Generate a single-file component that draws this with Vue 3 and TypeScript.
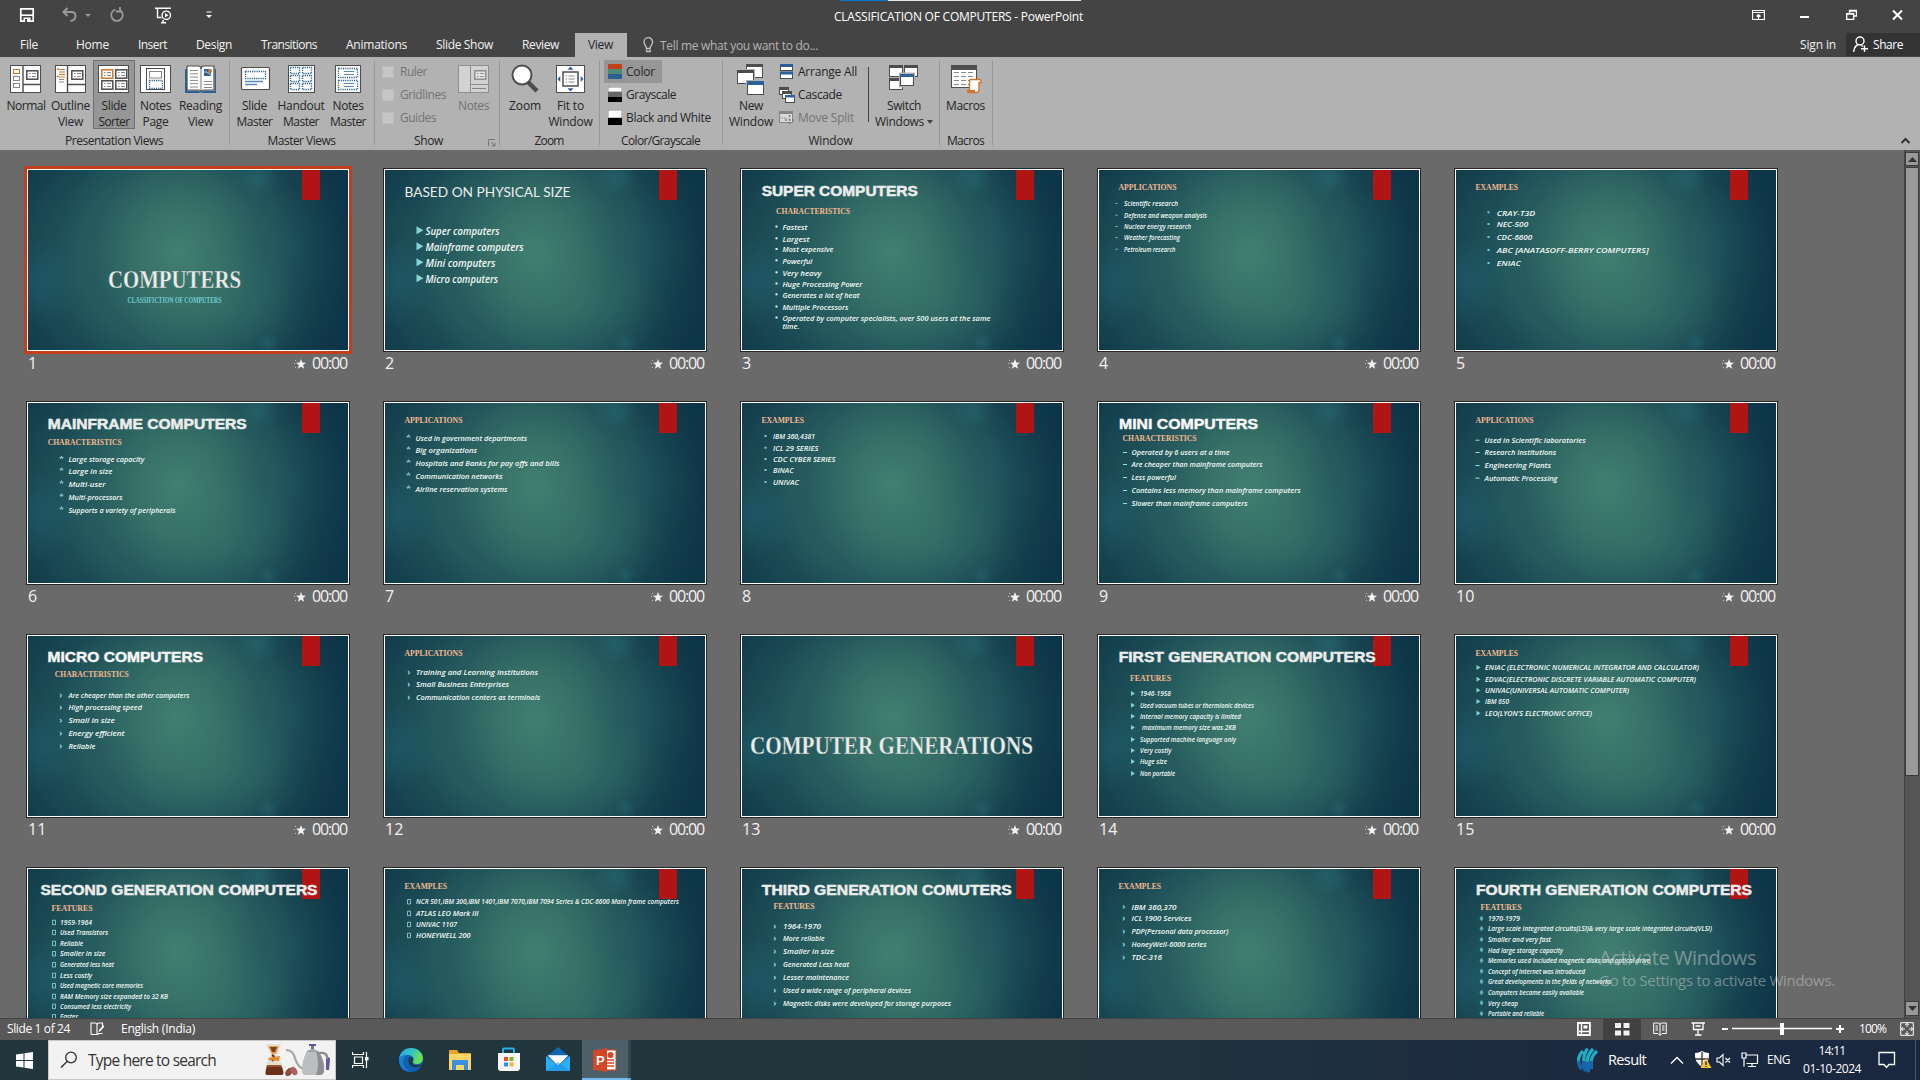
<script setup lang="ts">
type Line = [text: string, baseline: number, width: number, dx?: number]
interface Slide {
  title?: [text: string, x: number, width: number, kind: 'black' | 'thin' | 'deco', baseline: number, fill?: string]
  sub?: [text: string, x: number, baseline: number, width: number]
  bullet?: string
  bx?: number
  x?: number
  size?: number
  lines?: Line[]
}

const bold = (text: string, x: number, width: number, fill = '#ececec'): Slide['title'] => [text, x, width, 'black', 26, fill]

const slides: Slide[] = [
  { title: ['COMPUTERS', 80, 133, 'deco', 118], sub: ['CLASSIFICTION OF COMPUTERS', 99.5, 133, 94] },
  {
    title: ['BASED ON PHYSICAL SIZE', 19.5, 166, 'thin', 27], bullet: 'bigtri', bx: 31.5, x: 40.5, size: 10,
    lines: [['Super computers', 64.3, 74], ['Mainframe computers', 80.3, 98], ['Mini computers', 96.3, 70], ['Micro computers', 112.3, 72.5]],
  },
  {
    title: bold('SUPER COMPUTERS', 19.7, 156), sub: ['CHARACTERISTICS', 34, 44, 74], bullet: 'dotw', bx: 33.5, x: 40.4, size: 7.5,
    lines: [['Fastest', 59.5, 25], ['Largest', 71.3, 27], ['Most expensive', 82, 51], ['Powerful', 93.3, 30], ['Very heavy', 105.3, 39], ['Huge Processing Power', 116.5, 80], ['Generates a lot of heat', 127.3, 77], ['Multiple Processors', 139.5, 66], ['Operated by computer specialists, over 500 users at the same', 150.5, 208], ['time.', 158.5, 17, -1]],
  },
  {
    sub: ['APPLICATIONS', 19.5, 20, 58], bullet: 'minus', bx: 16.5, x: 25, size: 7,
    lines: [['Scientific research', 36, 54], ['Defense and weapon analysis', 47.7, 83], ['Nuclear energy research', 59, 67], ['Weather forecasting', 70, 56], ['Petroleum research', 81.7, 51.5]],
  },
  {
    sub: ['EXAMPLES', 19.5, 20, 42.5], bullet: 'dot', bx: 31.5, x: 40.7, size: 6.6,
    lines: [['CRAY-T3D', 45.3, 38.5], ['NEC-500', 57, 31.5], ['CDC-6600', 70, 35.5], ['ABC [ANATASOFF-BERRY COMPUTERS]', 83, 152], ['ENIAC', 96, 24]],
  },
  {
    title: bold('MAINFRAME COMPUTERS', 19.7, 199), sub: ['CHARACTERISTICS', 19.7, 41.7, 74], bullet: 'star', bx: 31.5, x: 40.4, size: 7.5,
    lines: [['Large storage capacity', 59, 76], ['Large in size', 70.7, 44], ['Multi-user', 83.7, 37], ['Multi-processors', 96.7, 54], ['Supports a variety of peripherals', 109.7, 107]],
  },
  {
    sub: ['APPLICATIONS', 19.5, 20, 58], bullet: 'star', bx: 21.5, x: 30.5, size: 7.5,
    lines: [['Used in government departments', 37.7, 111.5], ['Big organizations', 49.7, 61.5], ['Hospitals and Banks for pay offs and bills', 62.7, 144], ['Communication networks', 75.7, 87], ['Airline reservation systems', 88.7, 92]],
  },
  {
    sub: ['EXAMPLES', 19.5, 20, 42.5], bullet: 'dot', bx: 22.5, x: 31, size: 7,
    lines: [['IBM 360,4381', 36, 42], ['ICL 29 SERIES', 47.7, 45.5], ['CDC CYBER SERIES', 59, 62.5], ['BINAC', 70, 20.5], ['UNIVAC', 82, 26]],
  },
  {
    title: bold('MINI COMPUTERS', 20, 139, '#fff'), sub: ['CHARACTERISTICS', 23.5, 38, 74], bullet: 'dash', bx: 24, x: 32.5, size: 7.5,
    lines: [['Operated by 6 users at a time', 52, 98], ['Are cheaper than mainframe computers', 64, 131], ['Less powerful', 77, 44.5], ['Contains less memory than mainframe computers', 90, 169], ['Slower than mainframe computers', 103, 116]],
  },
  {
    sub: ['APPLICATIONS', 19.5, 20, 58], bullet: 'dash', bx: 19.5, x: 28.5, size: 7.5,
    lines: [['Used in Scientific laboratories', 39.7, 101], ['Research Institutions', 52, 71.5], ['Engineering Plants', 65, 66.5], ['Automatic Processing', 77.7, 73]],
  },
  {
    title: bold('MICRO COMPUTERS', 19.5, 155.5, '#fff'), sub: ['CHARACTERISTICS', 26.8, 41, 74], bullet: 'chev', bx: 32, x: 40.4, size: 7.5,
    lines: [['Are cheaper than the other computers', 62, 121], ['High processing speed', 74, 73.5], ['Small in size', 87, 46.5], ['Energy efficient', 100, 56], ['Reliable', 112.7, 27]],
  },
  {
    sub: ['APPLICATIONS', 19.5, 20, 58], bullet: 'chev', bx: 23, x: 31, size: 7.5,
    lines: [['Training and Learning Institutions', 39, 122], ['Small Business Enterprises', 51, 93], ['Communication centers as terminals', 64, 124]],
  },
  { title: ['COMPUTER GENERATIONS', 8, 283, 'deco', 118] },
  {
    title: bold('FIRST GENERATION COMPUTERS', 19.7, 257), sub: ['FEATURES', 31, 44.7, 41], bullet: 'tri', bx: 32, x: 41, size: 7,
    lines: [['1946-1958', 60, 31], ['Used vacuum tubes or thermionic devices', 71.7, 114], ['Internal memory capacity is limited', 82.7, 101], ['maximum memory size was 2KB', 94, 94, 2], ['Supported machine language only', 106, 96], ['Very costly', 117, 31.5], ['Huge size', 128, 27], ['Non portable', 140, 35]],
  },
  {
    sub: ['EXAMPLES', 19.5, 20, 42.5], bullet: 'tri', bx: 20.5, x: 29, size: 7,
    lines: [['ENIAC (ELECTRONIC NUMERICAL INTEGRATOR AND CALCULATOR)', 34, 214], ['EDVAC(ELECTRONIC DISCRETE VARIABLE AUTOMATIC COMPUTER)', 45.7, 211], ['UNIVAC(UNIVERSAL AUTOMATIC COMPUTER)', 56.7, 144], ['IBM 650', 68, 24], ["LEO(LYON'S ELECTRONIC OFFICE)", 79.7, 107]],
  },
  {
    title: bold('SECOND GENERATION COMPUTERS', 12.5, 277), sub: ['FEATURES', 23.5, 41.7, 41], bullet: 'box', bx: 24, x: 32, size: 7,
    lines: [['1959-1964', 55.7, 32], ['Used Transistors', 65.7, 48], ['Reliable', 76.7, 23], ['Smaller in size', 87, 45.5], ['Generated less heat', 98, 54], ['Less costly', 108.7, 32], ['Used magnetic core memories', 119, 83], ['RAM Memory size expanded to 32 KB', 129.7, 108], ['Consumed less electricity', 139.7, 71], ['Faster', 150, 18]],
  },
  {
    sub: ['EXAMPLES', 19.5, 20, 42.5], bullet: 'box', bx: 22, x: 31, size: 7,
    lines: [['NCR 501,IBM 300,IBM 1401,IBM 7070,IBM 7094 Series & CDC-6600 Main frame computers', 35, 263], ['ATLAS LEO Mark III', 46.7, 62.5], ['UNIVAC 1107', 57.7, 41], ['HONEYWELL 200', 68.7, 54.5]],
  },
  {
    title: bold('THIRD GENERATION COMUTERS', 19.8, 250), sub: ['FEATURES', 31.5, 40, 41], bullet: 'chev', bx: 32, x: 41, size: 7.5,
    lines: [['1964-1970', 60, 38], ['More reliable', 72, 41.5], ['Smaller in size', 85, 51], ['Generated Less heat', 98, 66], ['Lesser maintenance', 111, 66], ['Used a wide range of peripheral devices', 124, 128], ['Magnetic disks were developed for storage purposes', 137, 168]],
  },
  {
    sub: ['EXAMPLES', 19.5, 20, 42.5], bullet: 'chev', bx: 24, x: 32.5, size: 7.5,
    lines: [['IBM 360,370', 40.3, 45], ['ICL 1900 Services', 52, 60], ['PDP(Personal data processor)', 65, 97], ['HoneyWell-6000 series', 78, 75], ['TDC-316', 91, 30.5]],
  },
  {
    title: bold('FOURTH GENERATION COMPUTERS', 20, 276), sub: ['FEATURES', 24.5, 40.7, 41], bullet: 'gem', bx: 24, x: 32, size: 7,
    lines: [['1970-1979', 52, 32], ['Large scale integrated circuits(LSI)& very large scale integrated circuits(VLSI)', 62, 224], ['Smaller and very fast', 73, 63], ['Had large storage capacity', 83.3, 75], ['Memories used included magnetic disks and optical drive', 94, 162], ['Concept of internet was introduced', 104.7, 97], ['Great developments in the fields of networks', 115, 123], ['Computers became easily available', 126, 96], ['Very cheap', 136.3, 30], ['Portable and reliable', 147, 56]],
  },
]

const tabs: [string, number, number][] = [
  ['File', 20, 18], ['Home', 76, 33], ['Insert', 138, 29], ['Design', 196, 36], ['Transitions', 261, 56],
  ['Animations', 346, 61], ['Slide Show', 436, 57], ['Review', 522, 37], ['View', 588, 25],
]
const tabWidth = (i: number) => (i === 8 ? 52 : i === 0 ? 57 : tabs[i + 1][1] - tabs[i][1])

/* Tightens or loosens the tracking so that a label takes the width given. */
const vFit = {
  mounted(el: HTMLElement, binding: { value: number }) {
    const count = (el.textContent ?? '').trim().length
    const natural = el.getBoundingClientRect().width
    el.style.letterSpacing = `${(binding.value - natural) / count}px`
  },
}

const svg = (w: number, h: number, body: string) => `<svg width="${w}" height="${h}" viewBox="0 0 ${w} ${h}" style="display:block">${body}</svg>`
const D = '#4d4d4d'
const B = '#2b6099'
const O = '#d2752c'
const rows = (x: number, y: number, w: number, n: number, step: number, c = '#8a8a8a') =>
  Array.from({ length: n }, (_, i) => `<path d="M${x} ${y + i * step}h${w}" stroke="${c}"/>`).join('')
const pane = (x: number, y: number, w: number, h: number, c = D, f = '#fff') => `<rect x="${x + 0.5}" y="${y + 0.5}" width="${w - 1}" height="${h - 1}" fill="${f}" stroke="${c}"/>`
const win = (x: number, y: number, w: number, h: number, c = D) => pane(x, y, w, h, c) + `<path d="M${x} ${y}h${w}v3h${-w}z" fill="${c}"/>`
const mini = (x: number, y: number, c = D) => `<rect x="${x + 0.8}" y="${y + 0.8}" width="11" height="8.4" fill="#fff" stroke="${c}" stroke-width="1.5"/><path d="M${x + 3} ${y + 3.5}h1.5m1.5 0h4M${x + 3} ${y + 6.5}h1.5m1.5 0h4" stroke="#8a8a8a"/>`
const dotted = (x: number, y: number, w: number, h: number) => `<rect x="${x + 0.5}" y="${y + 0.5}" width="${w - 1}" height="${h - 1}" fill="none" stroke="${B}" stroke-width="1.3" stroke-dasharray="1.2 1"/>`

const big: Record<string, string> = {
  normal: svg(32, 34, pane(0, 1, 31, 28) + `<path d="M13 1v28M13 20.5h18" stroke="${D}" stroke-width="1.4" fill="none"/>` + pane(3, 5, 7, 5, O) + pane(3, 12, 7, 5, '#888') + pane(3, 19, 7, 5, '#888') + mini(16, 6)),
  outline: svg(32, 34, pane(0, 1, 31, 28) + `<path d="M12.5 1v28M12.5 20.5h18" stroke="${D}" stroke-width="1.4" fill="none"/><path d="M2 5h2M2 12.5h2" stroke="${O}" stroke-width="1.5"/>` + rows(4, 5.5, 6, 2, 2.5, O) + rows(4, 10.5, 6, 2, 2.5, O) + rows(4, 15.5, 5, 2, 2.5) + mini(16, 6)),
  sorter: svg(32, 34, pane(0, 1, 31, 28) + mini(3, 5, O) + mini(17, 5) + mini(3, 16) + mini(17, 16)),
  page: svg(32, 34, pane(0, 1, 31, 28) + `<rect x="9.5" y="7.5" width="12" height="6.5" fill="#fff" stroke="#888"/><rect x="6.5" y="4.5" width="18" height="21" fill="none" stroke="${D}"/>` + dotted(9, 16, 14, 9)),
  reading: svg(32, 34, `<path d="M0 5h2v22h12l2 2 2-2h12V5h1v24H0z" fill="${B}"/><path d="M2 2h11q3 0 3 3q0-3 3-3h10v24H19q-3 0-3 2q0-2-3-2H2z" fill="#fff" stroke="${D}" stroke-width="1.2"/><path d="M16 4v23" stroke="#777"/>` + rows(5, 6.5, 8, 6, 3.3) + rows(19, 17.5, 8, 3, 3) + `<path d="M19 5h7v7h-7z" fill="${B}"/><circle cx="25" cy="7" r="2" fill="${O}"/><path d="M19 8l3 0 4 3" stroke="#fff" fill="none" stroke-width=".7"/>`),
  smaster: svg(32, 34, `<rect x="2.5" y="3.5" width="28" height="22" rx="1" fill="#fff" stroke="${D}" stroke-width="1.2"/>` + dotted(6, 7, 21, 8) + `<path d="M6 17.5h18M6 20.5h12" stroke="#5b87b5" stroke-width="1.3"/>`),
  handout: svg(32, 34, pane(3, 1, 27, 28) + [3, 11, 19].map(y => dotted(5, y, 10, 7) + dotted(17, y, 10, 7)).join('')),
  nmaster: svg(32, 34, pane(3, 1, 26, 28) + dotted(6, 4, 20, 10) + dotted(6, 16, 20, 10) + rows(12, 7.5, 10, 2, 3, '#5b87b5') + rows(12, 19.5, 10, 2, 3, '#5b87b5')),
  notes: svg(32, 34, `<g opacity=".6">${pane(0, 1, 31, 28, '#777', '#e8e8e8')}<path d="M12.5 1v28M12.5 20.5h18" stroke="#777" fill="none"/>${mini(16, 6, '#777')}${rows(14, 24.5, 14, 1, 1, '#666')}</g>`),
  zoom: svg(32, 34, `<path d="M19 18l9 9" stroke="${D}" stroke-width="4.5"/><circle cx="13" cy="11" r="9.5" fill="#fff" stroke="${D}" stroke-width="2"/><circle cx="13" cy="11" r="8" fill="#fff"/>`),
  fit: svg(32, 34, pane(1, 1, 29, 28) + `<rect x="8" y="8" width="15" height="14" fill="#fff" stroke="${D}" stroke-width="1.5"/><path d="M10.5 12h1.5m1.5 0h6m-9 3h1.5m1.5 0h6m-9 3h1.5m1.5 0h6" stroke="#8a8a8a"/><path d="M15.5 2.5l3 3.2h-6zM15.5 27.5l3-3.2h-6zM2.5 15l2.8-3v6zM28.5 15l-2.8-3v6z" fill="${B}"/>`),
  neww: svg(32, 34, win(11, 0, 17, 14) + `<path d="M1 5h19v16H1z" fill="#b2b2b2"/>` + win(2, 6, 17, 14) + `<path d="M11 16h18v16H11z" fill="#b2b2b2"/>` + win(12, 17, 17, 14, D) + `<path d="M12 17h17v4H12z" fill="${B}"/>`),
  switchw: svg(32, 34, win(1, 1, 14, 12) + win(16, 1, 14, 12) + win(1, 14, 14, 12) + `<path d="M11 8.5h16v15H11z" fill="#b2b2b2"/>` + win(12, 10, 14, 12) + `<path d="M12 10h14v3H12z" fill="${B}"/>`),
  macros: svg(32, 34, win(1, 1, 26, 23) + `<path d="M1 1h26v5H1z" fill="${D}"/>` + [8.5, 12.5, 16.5, 20.5].map(y => `<path d="M4 ${y}h5m2 0h5m2 0h5" stroke="#888"/>`).join('') + `<path d="M20 15.5h9.5q2 0 1.5 3h-2v7q0 3-2.5 3h-9q2-1 2-3v-7.5z" fill="#fff" stroke="${O}" stroke-width="1.4"/><path d="M17 26h8v2.5h-8z" fill="${O}"/>`),
}

const small: Record<string, string> = {
  color: svg(14, 16, '<path d="M0 0h14v5H0z" fill="#c43e1c"/><path d="M0 5h14v5.5H0z" fill="#4b8b73"/><path d="M0 10h14v5H0z" fill="#2b5f97"/>'),
  gray: svg(14, 16, '<path d="M0 0h14v5H0z" fill="#fff" stroke="#888"/><path d="M0 5h14v5H0z" fill="#666"/><path d="M0 10h14v5H0z" fill="#000"/>'),
  bw: svg(14, 16, '<path d="M0 0h14v8H0z" fill="#fff" stroke="#888"/><path d="M0 8h14v7H0z" fill="#000"/>'),
  arrange: svg(16, 16, pane(1, 0, 13, 7, D) + pane(1, 8, 13, 7, D) + `<path d="M1 0h13v3H1zM1 7.5h13v3H1z" fill="${B}"/>`),
  cascade: svg(16, 16, win(0, 0, 10, 8) + win(3, 4, 10, 8) + pane(6, 8, 10, 8, D) + `<path d="M6 8h10v2.5H6z" fill="${B}"/>`),
  split: svg(16, 16, '<g opacity=".75"><rect x=".5" y="1.5" width="13" height="11" fill="#e6e6e6" stroke="#777"/><path d="M0 1h14v3H0z" fill="#777"/><path d="M0 8h8" stroke="#777" stroke-dasharray="1.5 1"/><path d="M10.5 5v10M6 10h9" stroke="#666" stroke-dasharray="2 1.5" stroke-width="1.5"/></g>'),
}

const star = '<path d="M7 0l1.3 3.5 3.7.2-2.9 2.4 1 3.6L7 7.7 3.9 9.7l1-3.6L2 3.7l3.7-.2z" fill="#f2f2f2"/><path d="M1 1.5h1M0 4.5h1M1 8.5h1" stroke="#ddd" stroke-width=".8"/>'

const w = 'stroke="#fff" fill="none"'
const ui: Record<string, string> = {
  save: svg(16, 16, `<path d="M1.8 1.8h12.4v12.4H1.8z" ${w} stroke-width="1.7"/><path d="M2 8.2h12" ${w} stroke-width="1.6"/><path d="M4.5 10.5h7V15h-7z" fill="#fff"/><path d="M6 12h2v3H6z" fill="#444"/>`),
  undo: svg(16, 16, '<path d="M5.5 1L1.5 5l4 4M2 5h7.5q4 0 4 4t-5 5" stroke="#999" stroke-width="2" fill="none"/>'),
  redo: svg(16, 16, '<path d="M6.5 2.5a5.8 5.8 0 1 0 5 1M11 0v4.5H7" stroke="#999" stroke-width="1.8" fill="none"/>'),
  present: svg(17, 17, `<path d="M0 1.2h16M2.5 1v9.5h4M6 15.8h5M8 13v3" ${w} stroke-width="1.4"/><circle cx="11.3" cy="8.3" r="4.2" fill="#444" stroke="#fff" stroke-width="1.3"/><path d="M10 6l3.5 2.3L10 10.6z" fill="#fff"/>`),
  more: svg(8, 8, `<path d="M1.5 1h5" ${w}/><path d="M1 4h6L4 7z" fill="#fff"/>`),
  ribbonopt: svg(13, 12, `<path d="M.5 1.5h12v9H.5zM.5 3.5h12M6.5 10V5.5M4.5 7.5l2-2 2 2" ${w} stroke-width="1.2"/>`),
  min: svg(9, 12, '<path d="M0 7h9v2H0z" fill="#fff"/>'),
  restore: svg(11, 12, `<path d="M.7 4.700h7v5.600h-7zM.5 5h7M3.500 4V1.500h7v5.500H8M3.500 2h7" ${w} stroke-width="1.3"/>`),
  close: svg(11, 12, `<path d="M1 1.500l9 9M10 1.500l-9 9" ${w} stroke-width="2"/>`),
  bulb: svg(11, 16, '<path d="M3.5 11.5C3.5 9 1 8 1 5a4.300 4.300 0 0 1 8.600 0C9.600 8 7 9 7 11.500zM3.500 12.500v2h3.700v-2" stroke="#c4c4c4" stroke-width="1.3" fill="none"/>'),
  share: svg(16, 17, `<circle cx="7" cy="5" r="4" ${w} stroke-width="1.4"/><path d="M.7 16q.3-5.5 4.5-7.5M8.5 9.5l1.5 1M8 12.8h7M11.5 9.5v6.5" ${w} stroke-width="1.4"/>`),
  caret: svg(11, 8, '<path d="M1.5 6l4-4 4 4" stroke="#333" stroke-width="2" fill="none"/>'),
  book: svg(15, 14, `<path d="M7 12.5H2q-1 0-1-1V1h4q2 0 2 2v9.5q1 0 2-1h3.5M12.5 6V1H9Q7 1 7 3" ${w} stroke-width="1.1"/><path d="M13.5 3L9 8l-.5 2 2-1 3.5-4z" fill="#fff"/>`),
  vnormal: svg(14, 14, `<path d="M.9 1h12v12h-12z" ${w} stroke-width="1.8"/><path d="M2 9.5h11M4.5 1v12" ${w} stroke-width="1.5"/><path d="M6.5 3.5h4v3h-4z" fill="#fff"/>`),
  vsorter: svg(15, 14, '<path d="M0 1h6v5H0zM8.5 1h6v5h-6zM0 8.5h6v5H0zM8.5 8.5h6v5h-6z" fill="#f0f0f0"/>'),
  vread: svg(14, 14, `<path d="M.7 1h4.5q1.8 0 1.8 1.5Q7 1 8.8 1h4.5v10.5H9L7 13.5 5 11.5H.7zM7 2v11M2.5 4h2.5M2.5 6h2.5M2.5 8h2.5M9 4h2.5M9 6h2.5M9 8h2.5" ${w}/>`),
  vshow: svg(15, 14, `<path d="M.5 1h13.5M2.5 1.5v6h9.5v-6M7 8v4.5M4 13h6.5M4.5 4h5" ${w} stroke-width="1.3"/>`),
  vfit: svg(14, 14, `<path d="M.7.7h12.6v12.6H.7z" ${w}/><path d="M7 1v4M7 9v4M1 7h4M9 7h4M5 3l2-1.5L9 3M5 11l2 1.5L9 11M3 5L1.5 7 3 9M11 5l1.5 2L11 9" ${w} stroke-width=".9"/>`),
}

const tray: Record<string, string> = {
  start: svg(17, 17, '<path d="M0 2.4l7.5-1V8H0zM8.5 1.2L17 0v8H8.5zM0 9h7.5v6.6L0 14.6zM8.5 9H17v8l-8.5-1.2z" fill="#fff"/>'),
  search: svg(18, 18, '<circle cx="11" cy="6.5" r="5.3" stroke="#333" fill="none" stroke-width="1.3"/><path d="M7.3 10.3L1 16.5" stroke="#333" stroke-width="1.4"/>'),
  art: svg(68, 34, '<path d="M2 1h15l-4 12q5 5 7 17 0 2-2 2H3q-2 0-2-2 1-12 6-17z" fill="#eadfce"/><path d="M4 3h11l-3 8H8z" fill="#e6a35f"/><path d="M6 4h7l-2 5H8z" fill="#7b4220"/><path d="M8 12q4 2 0 6" stroke="#5a2f16" stroke-width="2" fill="none"/><path d="M4 15l12-2-1 5-10-1z" fill="#e08a2c"/><path d="M3 22h14q2 4 2.5 8 0 2-2 2H3q-2 0-1.5-2 .5-4 1.5-8z" fill="#6b3117"/><path d="M3 23h14" stroke="#a55e35" stroke-width="1.5"/><ellipse cx="25" cy="29" rx="4.5" ry="3" fill="#8e4b43" transform="rotate(-50 25 29)"/><ellipse cx="30" cy="28" rx="4.5" ry="3" fill="#a8655a" transform="rotate(60 30 28)"/><path d="M22 7q7 0 9 8t8 11" fill="none" stroke="#a4a7aa" stroke-width="2.2"/><path d="M43 8h11q7 9 6 20-.5 4-4 4H42q-4 0-4-4 0-11 5-20z" fill="#bcbec1"/><path d="M52 8h2q7 9 6 20-.5 4-4 4h-4q4-10 0-24z" fill="#8b8e93"/><path d="M42 9q6-6 13 0z" fill="#9fa2a6"/><path d="M45 1h7v2h-7z" fill="#605a9b"/><path d="M47 3h3v3h-3z" fill="#777"/><path d="M64 14q2 0 2 3l-1 10h-3V15z" fill="#605a9b"/><path d="M55 10q9-1 8 6" stroke="#8a8d92" stroke-width="2.2" fill="none"/>'),
  task: svg(17, 18, '<path d="M2.5 6h8v6.5h-8zM.5 1v2.5h11V1M.5 17v-2.5h11V17M14.5 1v16" stroke="#fff" fill="none" stroke-width="1.2"/><path d="M13 6h3.5v3.5H13z" fill="#fff"/>'),
  edge: svg(26, 26, '<defs><linearGradient id="eg" x1="0" y1="0" x2="1" y2=".3"><stop offset="0" stop-color="#27a9ea"/><stop offset=".6" stop-color="#35c6c2"/><stop offset="1" stop-color="#6be04a"/></linearGradient></defs><circle cx="13" cy="13" r="12" fill="#0f62b4"/><path d="M1 14C1 5 7 1 13 1c7 0 12 5 12 10 0 4-3 6-6 6-3 0-5-1-4-3 2-3-1-6-5-6C5 8 1 11 1 14z" fill="url(#eg)"/><path d="M1 13c0-3 4-6 8-5-5 2-6 13 4 17C6 25 1 20 1 13z" fill="#1580d4"/><path d="M15 14c-2 4 3 6 9 3 1 0 0 1-1 2-7 4-15-1-12-8 2-2 5 0 4 3z" fill="#213940"/>'),
  files: svg(24, 24, '<path d="M1 2h8l2 3h11q1 0 1 1v4H1z" fill="#e3a52c"/><path d="M1 6h22v16H1z" fill="#fbd665"/><path d="M4 13q0-1 1-1h14q1 0 1 1v9h-4v-4q0-1-1-1H9q-1 0-1 1v4H4z" fill="#3b8fe0"/>'),
  store: svg(24, 26, '<path d="M6 8V2.5q0-1 1-1h9q1 0 1 1V8" stroke="#23b1f0" stroke-width="2" fill="none"/><path d="M1 6h22v15q0 3-3 3H4q-3 0-3-3z" fill="#f7f7f7"/><path d="M7 10h4v4H7z" fill="#e8502f"/><path d="M12.5 10h4v4h-4z" fill="#7db828"/><path d="M7 15.5h4v4H7z" fill="#1f9ae8"/><path d="M12.5 15.5h4v4h-4z" fill="#f8b61b"/>'),
  mail: svg(26, 26, '<path d="M1 10L13 0l12 10v4H1z" fill="#1466b4"/><path d="M3 8.5h20L13 19z" fill="#fff"/><path d="M1 9l12 9.5L25 9v15H1z" fill="#2aaef5"/><path d="M3 8.5h20L13 18z" fill="#fff"/><path d="M13 15l12 9H1z" fill="#1a90e2" opacity=".55"/>'),
  ppt: svg(24, 24, '<path d="M12 2h11v20H12z" fill="#fff" stroke="#d24726"/><path d="M14 12h7M14 15h7M14 18h7" stroke="#d24726" stroke-width="1.5"/><circle cx="17.5" cy="7" r="3" fill="#d24726"/><path d="M0 2.5L14 0v24L0 21.5z" fill="#d24726"/><text x="3" y="17" font-family="Liberation Sans" font-weight="700" font-size="13" fill="#fff">P</text>'),
  globe: svg(22, 26, '<path d="M6 4Q1 9 1.5 14q.5 5 3 8M10.5 1.5Q4 11 8.5 24M16 2Q7 11 11.5 25M20 4Q12 11 14.5 22" stroke="#22acc3" stroke-width="3.2" fill="none"/><path d="M1.8 14q.5 5 3 8M6.5 14q.3 6 2 10M9.8 15q0 6 1.7 10M13.8 14q-.3 5 .7 8" stroke="#1763ad" stroke-width="3.2" fill="none"/>'),
  chev: svg(14, 9, '<path d="M1 7.5l6-6 6 6" stroke="#fff" fill="none" stroke-width="1.3"/>'),
  shield: svg(18, 18, '<path d="M8 0q3 2 7 2 1 9-7 14Q0 11 1 2q4 0 7-2z" fill="#fff"/><path d="M8 1v14M1 8h13" stroke="#333" stroke-width="1.3"/><path d="M12 7l5.5 10H6.5z" fill="#fbc02d"/><path d="M12 10.5v3.5M12 15v1" stroke="#222" stroke-width="1.3"/>'),
  mute: svg(16, 14, '<path d="M1 5h2.5L7 1.5v11L3.5 9H1zM9.5 5l4.500 4.500M14 5L9.500 9.500" stroke="#fff" fill="none" stroke-width="1.1"/>'),
  net: svg(18, 16, '<path d="M5 3h11.5v8.5H5.5M11 12v2.5M7 14.5h8M1 1h4v5H1zM3 6v8.5" stroke="#fff" fill="none" stroke-width="1.2"/>'),
  note: svg(18, 18, '<path d="M1 1.5h15.5v12H11l-2.500 3-2.500-3H1z" stroke="#fff" fill="none" stroke-width="1.3"/>'),
}

interface Btn { icon: string; w: number; labels: [string, number][]; on?: boolean; dim?: boolean; drop?: boolean }
const views: Btn[] = [
  { icon: 'normal', w: 44, labels: [['Normal', 39]] },
  { icon: 'outline', w: 45, labels: [['Outline', 39], ['View', 25]] },
  { icon: 'sorter', w: 42, labels: [['Slide', 25], ['Sorter', 31]], on: true },
  { icon: 'page', w: 41, labels: [['Notes', 31], ['Page', 26]] },
  { icon: 'reading', w: 49, labels: [['Reading', 43], ['View', 25]] },
]
const masters: Btn[] = [
  { icon: 'smaster', w: 43, labels: [['Slide', 25], ['Master', 36]] },
  { icon: 'handout', w: 50, labels: [['Handout', 47], ['Master', 36]] },
  { icon: 'nmaster', w: 44, labels: [['Notes', 31], ['Master', 36]] },
]
const notes: Btn[] = [{ icon: 'notes', w: 41, labels: [['Notes', 31]], dim: true }]
const zooms: Btn[] = [
  { icon: 'zoom', w: 46, labels: [['Zoom', 32]] },
  { icon: 'fit', w: 45, labels: [['Fit to', 27], ['Window', 44]] },
]
const newWin: Btn[] = [{ icon: 'neww', w: 50, labels: [['New', 24], ['Window', 44]] }]
const switchWin: Btn[] = [{ icon: 'switchw', w: 64, labels: [['Switch', 34], ['Windows', 49]], drop: true }]
const macros: Btn[] = [{ icon: 'macros', w: 45, labels: [['Macros', 39]] }]

interface Cell { kind: 'btns' | 'checks' | 'color' | 'arrange' | 'rule'; btns?: Btn[] }
interface Group { name: string; nw: number; w: number; pad: number; cells: Cell[]; launcher?: boolean }
const groups: Group[] = [
  { name: 'Presentation Views', nw: 98, w: 230, pad: 4, cells: [{ kind: 'btns', btns: views }] },
  { name: 'Master Views', nw: 68, w: 145, pad: 3, cells: [{ kind: 'btns', btns: masters }] },
  { name: 'Show', nw: 29, w: 125, pad: 7, cells: [{ kind: 'checks' }, { kind: 'btns', btns: notes }], launcher: true },
  { name: 'Zoom', nw: 29, w: 100, pad: 2, cells: [{ kind: 'btns', btns: zooms }] },
  { name: 'Color/Grayscale', nw: 79, w: 123, pad: 4, cells: [{ kind: 'color' }] },
  { name: 'Window', nw: 44, w: 217, pad: 3, cells: [{ kind: 'btns', btns: newWin }, { kind: 'arrange' }, { kind: 'rule' }, { kind: 'btns', btns: switchWin }] },
  { name: 'Macros', nw: 37, w: 53, pad: 3, cells: [{ kind: 'btns', btns: macros }] },
]
const checks: [string, number][] = [['Ruler', 27], ['Gridlines', 46], ['Guides', 36]]
const colors: [string, string, number][] = [['color', 'Color', 29], ['gray', 'Grayscale', 50], ['bw', 'Black and White', 85]]
const arranges: [string, string, number][] = [['arrange', 'Arrange All', 59], ['cascade', 'Cascade', 44], ['split', 'Move Split', 56]]
</script>

<template>
  <div class="screen">
    <header class="titlebar">
      <div class="stripe"><i></i></div>
      <div class="qat">
        <span v-html="ui.save" /><span v-html="ui.undo" class="q2" /><i class="tiny" /><span v-html="ui.redo" class="q3" />
        <span v-html="ui.present" class="q4" /><span v-html="ui.more" class="q5" />
      </div>
      <div class="doc"><span v-fit="249">CLASSIFICATION OF COMPUTERS - PowerPoint</span></div>
      <div class="winbtns">
        <span v-html="ui.ribbonopt" /><span v-html="ui.min" /><span v-html="ui.restore" /><span v-html="ui.close" />
      </div>
    </header>

    <nav class="tabs">
      <div v-for="(t, i) in tabs" :key="t[0]" class="tab" :class="{ active: i === 8, file: i === 0, pre: i === 7 }" :style="{ width: tabWidth(i) + 'px' }">
        <span v-fit="t[2]">{{ t[0] }}</span>
      </div>
      <div class="tell"><span v-html="ui.bulb" /><span v-fit="158">Tell me what you want to do...</span></div>
      <div class="signin"><span v-fit="36">Sign in</span></div>
      <div class="share"><span v-html="ui.share" /><span v-fit="30">Share</span></div>
    </nav>

    <section class="ribbon">
      <div v-for="g in groups" :key="g.name" class="group" :style="{ width: g.w + 'px' }">
        <div class="cells" :style="{ paddingLeft: g.pad + 'px' }">
          <template v-for="(c, ci) in g.cells" :key="ci">
            <template v-if="c.kind === 'btns'">
              <div v-for="b in c.btns" :key="b.icon" class="btn" :class="{ on: b.on, dim: b.dim }" :style="{ width: b.w + 'px' }">
                <span class="ico" v-html="big[b.icon]" />
                <span v-for="(l, li) in b.labels" :key="li" class="lab">
                  <span v-fit="l[1]">{{ l[0] }}</span><i v-if="b.drop && li === 1" class="drop" />
                </span>
              </div>
            </template>
            <div v-else-if="c.kind === 'checks'" class="list checks">
              <div v-for="k in checks" :key="k[0]" class="row dim"><i class="check" /><span v-fit="k[1]">{{ k[0] }}</span></div>
            </div>
            <div v-else-if="c.kind === 'color'" class="list color">
              <div v-for="(k, ki) in colors" :key="k[0]" class="row" :class="{ sel: ki === 0 }"><span v-html="small[k[0]]" /><span v-fit="k[2]">{{ k[1] }}</span></div>
            </div>
            <div v-else-if="c.kind === 'arrange'" class="list arrange">
              <div v-for="(k, ki) in arranges" :key="k[0]" class="row" :class="{ dim: ki === 2 }"><span v-html="small[k[0]]" /><span v-fit="k[2]">{{ k[1] }}</span></div>
            </div>
            <i v-else class="rule" />
          </template>
        </div>
        <div class="gname" :class="{ launch: g.launcher }">
          <span v-fit="g.nw">{{ g.name }}</span>
          <svg v-if="g.launcher" class="launcher" width="8" height="8" viewBox="0 0 8 8"><path d="M.5 7V.5H7M3 3l4 4M7 3.5V7H3.5" stroke="#777" fill="none" /></svg>
        </div>
      </div>
      <span class="collapse" v-html="ui.caret" />
    </section>

    <main class="work">
      <div class="sorter">
        <article v-for="(s, i) in slides" :key="i" class="card">
          <div class="frame" :class="{ picked: i === 0 }">
            <svg class="slide" width="320" height="180" viewBox="0 0 320 180">
              <path d="M274 0h18v30h-18z" fill="#b01513" />
              <text v-if="s.title" :class="s.title[3]" :x="s.title[1]" :y="s.title[4]" :textLength="s.title[2]" lengthAdjust="spacingAndGlyphs" :fill="s.title[5] ?? '#ececec'">{{ s.title[0] }}</text>
              <text v-if="s.sub" :class="['sub', { cyan: i === 0 }]" :x="s.sub[1]" :y="s.sub[2]" :textLength="s.sub[3]" lengthAdjust="spacingAndGlyphs">{{ s.sub[0] }}</text>
              <g v-for="l in s.lines ?? []" :key="l[0]">
                <g v-if="(l[3] ?? 0) >= 0" :transform="`translate(${s.bx} ${l[1]})`">
                  <path v-if="s.bullet === 'bigtri'" d="M0-8v8l7-4z" fill="#85d3d3" />
                  <path v-else-if="s.bullet === 'tri'" d="M0-5v5l4-2.5z" fill="#7fcfd0" />
                  <path v-else-if="s.bullet === 'dot'" d="M0-4h2v2H0z" fill="#7fcfd0" />
                  <path v-else-if="s.bullet === 'dotw'" d="M0-4h2v2H0z" fill="#e8f4f2" />
                  <path v-else-if="s.bullet === 'minus'" d="M0-2.5h2" stroke="#7fcfd0" />
                  <path v-else-if="s.bullet === 'dash'" d="M0-2.5h4" stroke="#9adfe0" />
                  <path v-else-if="s.bullet === 'star'" d="M0-4.5h4M1-3l1-3 1 3" stroke="#86c9cf" fill="none" stroke-width=".9" />
                  <path v-else-if="s.bullet === 'chev'" d="M0-4l1.5 1.7-1.5 1.7" stroke="#7fcfd0" fill="none" stroke-width="1.2" />
                  <path v-else-if="s.bullet === 'box'" d="M.5-4.5h3v4.500h-3z" stroke="#9adfe0" fill="none" stroke-width=".8" />
                  <path v-else d="M1.5-4.8l1.5 2.3-1.5 2.3L0-2.5z" fill="#5fb3ba" stroke="#7fcfd0" stroke-width=".5" />
                </g>
                <text class="hand" :x="(s.x ?? 0) + Math.max(l[3] ?? 0, 0)" :y="l[1] + 0.3" :font-size="s.size" :textLength="l[2]" lengthAdjust="spacingAndGlyphs">{{ l[0] }}</text>
              </g>
            </svg>
          </div>
          <footer class="meta">
            <span>{{ i + 1 }}</span>
            <span class="time"><svg width="12" height="10" viewBox="0 0 12 10" v-html="star" /><span v-fit="35">00:00</span></span>
          </footer>
        </article>
      </div>
      <div class="scroll">
        <i class="arrow up"><svg width="9" height="5" viewBox="0 0 9 5"><path d="M0 5l4.5-5L9 5z" fill="#333" /></svg></i>
        <i class="thumb" />
        <i class="arrow down"><svg width="9" height="5" viewBox="0 0 9 5"><path d="M0 0l4.5 5L9 0z" fill="#333" /></svg></i>
      </div>
      <aside class="activate">
        <p class="a1"><span v-fit="157">Activate Windows</span></p>
        <p class="a2"><span v-fit="236">Go to Settings to activate Windows.</span></p>
      </aside>
    </main>

    <section class="status">
      <span v-fit="63" class="st1">Slide 1 of 24</span>
      <span class="st2" v-html="ui.book" />
      <span v-fit="74" class="st3">English (India)</span>
      <div class="zoomer">
        <span class="v" v-html="ui.vnormal" /><span class="v act" v-html="ui.vsorter" /><span class="v" v-html="ui.vread" /><span class="v" v-html="ui.vshow" />
        <svg class="slider" width="122" height="14" viewBox="0 0 122 14"><path d="M0 7h6M114 7h8M118 3v8" stroke="#fff" stroke-width="2" /><path d="M10 6.5h100" stroke="#fff" stroke-width="1.3" /><path d="M58 1h4v12h-4z" fill="#fff" /></svg>
        <span v-fit="27" class="pct">100%</span>
        <span v-html="ui.vfit" />
      </div>
    </section>

    <section class="taskbar">
      <div class="start" v-html="tray.start" />
      <div class="search"><span v-html="tray.search" /><span v-fit="128" class="ph">Type here to search</span><span class="art" v-html="tray.art" /></div>
      <div class="app task" v-html="tray.task" />
      <div class="app" v-html="tray.edge" />
      <div class="app" v-html="tray.files" />
      <div class="app" v-html="tray.store" />
      <div class="app" v-html="tray.mail" />
      <div class="app run" v-html="tray.ppt" />
      <i class="stack" />
      <div class="tray">
        <span v-html="tray.globe" /><span v-fit="38" class="res">Result</span>
        <span class="t1" v-html="tray.chev" /><span class="t2" v-html="tray.shield" /><span class="t3" v-html="tray.mute" /><span class="t4" v-html="tray.net" />
        <span v-fit="23" class="eng">ENG</span>
        <div class="clock"><span v-fit="27">14:11</span><span v-fit="58">01-10-2024</span></div>
        <span class="t5" v-html="tray.note" />
        <i class="desk" />
      </div>
    </section>
  </div>
</template>

<style>
body { margin: 0; overflow: hidden; background: #6a6a6a; }
</style>

<style scoped>
.screen { width: 1920px; height: 1080px; display: flex; flex-direction: column; overflow: hidden; font: 12px/16px "Open Sans", "Noto Sans", sans-serif; color: #262626; }
.screen span { white-space: nowrap; }
i { display: block; font-style: normal; }

.titlebar { position: relative; height: 33px; background: #444; color: #fff; display: flex; align-items: center; }
.stripe { position: absolute; left: 840px; top: 0; width: 241px; height: 1px; background: #e6e6e6; }
.stripe i { width: 48px; height: 1px; background: #0078d7; }
.qat { width: 834px; display: flex; align-items: center; padding-left: 19px; box-sizing: border-box; margin-top: -3px; }
.q2 { margin-left: 27px; }
.tiny { width: 0; margin-left: 7px; border: 3px solid transparent; border-top-color: #999; border-bottom: 0; }
.q3 { margin-left: 18px; }
.q4 { margin-left: 30px; }
.q5 { margin-left: 33px; }
.doc { flex: 1; }
.winbtns { display: flex; align-items: center; gap: 35px; margin: -3px 17px 0 0; }
.winbtns span { display: block; }
.winbtns span:nth-child(2) { margin-right: 2px; }

.tabs { height: 24px; background: #444; color: #f2f2f2; display: flex; line-height: 23px; }
.tab { box-sizing: border-box; }
.tab.file { margin-left: 20px; width: 56px !important; }
.tab.pre { width: 53px !important; }
.tab.active { background: #b2b2b2; color: #262626; padding-left: 13px; }
.tell { display: flex; gap: 6px; align-items: center; height: 24px; margin-left: 16px; color: #b4b4b4; }
.signin { margin-left: auto; margin-right: 10px; }
.share { width: 74px; height: 23px; background: #333; display: flex; align-items: center; gap: 4px; padding-left: 7px; box-sizing: border-box; color: #fff; }

.ribbon { position: relative; height: 93px; background: #b2b2b2; display: flex; padding-top: 3px; box-sizing: border-box; }
.group { position: relative; box-sizing: border-box; display: flex; flex-direction: column; }
.group::after { content: ''; position: absolute; right: 0; top: 1px; width: 1px; height: 84px; background: #969696; }
.cells { display: flex; height: 70px; }
.btn { height: 69px; box-sizing: border-box; display: flex; flex-direction: column; align-items: center; padding-top: 4px; flex: none; }
.btn.on { background: #969696; box-shadow: inset 0 0 0 1px #6f6f6f; }
.ico { height: 34px; }
.lab { height: 16px; display: flex; align-items: center; }
.drop { border: 3px solid transparent; border-top: 4px solid #444; border-bottom: 0; margin-left: 3px; }
.dim { color: #747474; }
.gname { height: 16px; margin-top: 3px; padding-right: 2px; display: flex; justify-content: center; position: relative; }
.gname.launch { padding-right: 18px; }
.launcher { position: absolute; right: 4px; top: 6px; }
.list { display: flex; flex-direction: column; }
.row { height: 23px; display: flex; align-items: center; }
.checks { width: 71px; }
.check { width: 12px; height: 12px; background: #c6c6c6; border: 1px solid #bdbdbd; box-sizing: border-box; margin-right: 6px; }
.color .row { padding-left: 4px; gap: 4px; margin-right: 0; }
.color .row.sel { background: #969696; width: 58px; box-sizing: border-box; }
.arrange { width: 86px; padding-left: 3px; }
.arrange .row { gap: 3px; }
.rule { width: 1px; height: 55px; margin: 7px 3px 0 3px; background: #444; }
.collapse { position: absolute; right: 9px; bottom: 5px; }

.work { position: relative; height: 868px; background: #6a6a6a; overflow: hidden; display: flex; justify-content: space-between; }
.sorter { display: grid; grid-template-columns: repeat(5, 324px); grid-auto-rows: 233px; column-gap: 33px; padding: 18px 0 0 26px; height: 850px; }
.frame { width: 322px; height: 182px; border: 1px solid #262626; }
.frame.picked { border-color: #c43e1c; box-shadow: 0 0 0 2px #c43e1c; }
.slide { display: block; border: 1px solid #fff; background:
  radial-gradient(ellipse 22px 20px at 72% 4%, rgba(42,110,122,.5), transparent),
  radial-gradient(ellipse 11px 11px at 75% 96%, rgba(42,110,122,.45), transparent),
  radial-gradient(ellipse 40px 45px at 4% 62%, rgba(32,98,114,.5), transparent),
  linear-gradient(90deg, transparent 78%, rgba(12,50,70,.55) 100%),
  radial-gradient(ellipse 45px 60px at 84% 42%, rgba(36,96,108,.3), transparent),
  radial-gradient(ellipse 90px 60px at 60% 75%, rgba(60,125,110,.35), transparent),
  radial-gradient(ellipse 120px 135px at 47% 46%, #427f72 0%, rgba(58,116,105,.85) 35%, rgba(44,98,97,.4) 70%, transparent),
  radial-gradient(ellipse 190px 160px at 45% 50%, #265d61 0%, #22565c 50%, #143f4d 88%, #0e384a 100%); }
.slide text { white-space: pre; }
.black { font: 700 14px "Liberation Sans", Arial, sans-serif; stroke: #ececec; stroke-width: .5px; }
.thin { font: 400 14px "Lato", sans-serif; }
.deco { font: 700 25px "Liberation Serif", serif; stroke: #426d68; stroke-width: .3px; }
.sub { font: 700 7.6px "Liberation Serif", serif; fill: #f6b88f; }
.sub.cyan { fill: #72ccd4; }
.hand { font-family: "Open Sans", sans-serif; font-style: italic; font-weight: 600; fill: #f4f9f7; }
.meta { display: flex; justify-content: space-between; font-size: 16px; line-height: 23px; color: #f2f2f2; padding: 0 3px 0 2px; }
.time { display: flex; align-items: center; gap: 6px; }

.scroll { width: 16px; background: #555; display: flex; flex-direction: column; border-left: 1px solid #444; box-sizing: border-box; }
.arrow { width: 14px; height: 14px; box-sizing: border-box; border: 1px solid #3c3c3c; background: #999; display: flex; align-items: center; justify-content: center; margin-top: 2px; }
.thumb { width: 14px; height: 609px; box-sizing: border-box; border: 1px solid #3c3c3c; background: #999; margin-top: 1px; }
.down { margin-top: auto; margin-bottom: 2px; height: 15px; }

.activate { position: absolute; left: 1599px; top: 794px; color: rgba(205,205,205,.5); }
.activate p { margin: 0; }
.a1 { font-size: 20px; line-height: 28px; }
.a2 { font-size: 15px; line-height: 17px; }

.status { height: 22px; box-sizing: border-box; background: #595959; border-top: 1px solid #444; color: #fff; display: flex; align-items: center; padding: 0 0 1px 7px; font-size: 12px; }
.st2 { margin-left: 20px; }
.st3 { margin-left: 16px; }
.zoomer { margin-left: auto; display: flex; align-items: center; height: 21px; margin-right: 6px; }
.v { width: 38px; height: 21px; display: flex; align-items: center; justify-content: center; }
.v.act { background: #414141; }
.slider { margin-left: 5px; }
.pct { margin: 0 14px 0 15px; }

.taskbar { height: 40px; background: linear-gradient(90deg, #22363d 0%, #21353d 55%, #1c2b40 80%, #1a2740 100%); display: flex; color: #fff; }
.start { width: 48px; display: flex; align-items: center; justify-content: center; }
.search { width: 288px; box-sizing: border-box; background: #f2f2f2; border: 1px solid #c8c8c8; display: flex; align-items: center; padding-left: 11px; color: #333; }
.ph { font-size: 15.5px; margin-left: 10px; line-height: 24px; }
.art { margin-left: auto; margin-right: 3px; }
.app { width: 49px; height: 40px; display: flex; align-items: center; justify-content: center; }
.app.task { width: 48px; margin-right: 2px; }
.app.run { width: 46px; background: #4b6068; box-shadow: inset 0 -2px #76b9ed; }
.stack { width: 3px; background: #32464f; box-shadow: inset 0 -2px #6aa7d6; }
.tray { margin-left: auto; display: flex; align-items: center; width: 343px; }
.res { font-size: 14.5px; margin-left: 9px; }
.t1 { margin-left: 24px; }
.t2 { margin-left: 10px; }
.t3 { margin-left: 4px; }
.t4 { margin-left: 9px; }
.eng { margin-left: 8px; }
.clock { width: 60px; margin-left: 12px; display: flex; flex-direction: column; align-items: center; line-height: 18px; }
.t5 { margin-left: 16px; }
.desk { width: 1px; height: 40px; margin-left: auto; margin-right: 4px; background: #4a566b; }
</style>
